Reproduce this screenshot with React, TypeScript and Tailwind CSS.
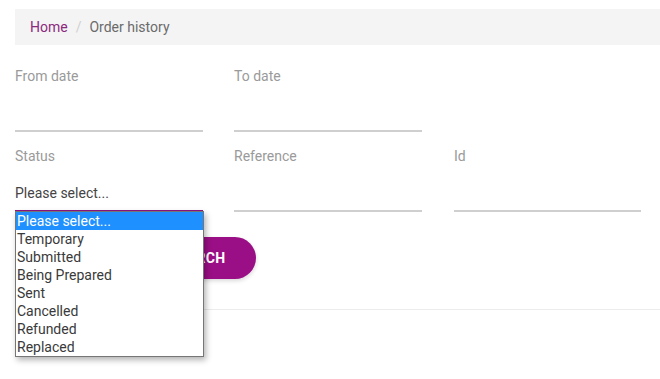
import React from 'react';

const statuses = ['Please select...', 'Temporary', 'Submitted', 'Being Prepared', 'Sent', 'Cancelled', 'Refunded', 'Replaced'];

const Field = ({ label }: { label: string }) => (
  <div className="flex flex-col">
    <div className="h-[20px] text-[14px] leading-[20px] text-[#9a9a9a]">{label}</div>
    <div className="h-[46px] border-b-2 border-[#cfcfcf]" />
  </div>
);

export default function App() {
  return (
    <div
      className="relative w-[660px] h-[379px] overflow-hidden bg-white"
      style={{ fontFamily: 'Roboto, "Liberation Sans", sans-serif' }}
    >
      <div className="ml-[15px] mt-[9px] h-[36px] bg-[#f4f4f4] pl-[15px] flex items-center text-[14px]">
        <span className="text-[#8b2a7c]">Home</span>
        <span className="px-[8px] text-[#d0d0d0]">/</span>
        <span className="text-[#6b6b6b]">Order history</span>
      </div>

      <div className="ml-[15px] mt-[21px] grid grid-cols-[188px_188px_188px] gap-x-[31px] gap-y-[14px]">
        <Field label="From date" />
        <Field label="To date" />
        <div />
        <div className="flex flex-col">
          <div className="h-[20px] text-[14px] leading-[20px] text-[#9a9a9a]">Status</div>
          <div className="h-[46px] border-b-2 border-[#8e1480] pt-[17px] text-[14px] leading-[20px] text-[#444]">
            Please select...
          </div>
        </div>
        <Field label="Reference" />
        <div className="ml-[1px]">
          <Field label="Id" />
        </div>
      </div>

      <div className="ml-[139px] mt-[25px] h-[42px] w-[117px] rounded-full bg-[#9b0f86] text-white text-[14px] font-bold flex items-center justify-center tracking-[0.3px] shadow-[0_2px_4px_rgba(0,0,0,0.15)]">
        SEARCH
      </div>

      <div className="ml-[15px] mt-[30px] border-t border-[#ececec]" />

      <div className="absolute left-[15px] top-[211px] w-[189px] border border-[#767676] bg-white shadow-[2px_3px_6px_rgba(0,0,0,0.3)]">
        {statuses.map((s, i) => (
          <div
            key={s}
            className={
              i === 0
                ? 'h-[18px] leading-[18px] pl-[1px] text-[14px] bg-[#1e90ff] text-white'
                : 'h-[18px] leading-[18px] pl-[1px] text-[14px] text-[#3a3a3a]'
            }
          >
            {s}
          </div>
        ))}
      </div>
    </div>
  );
}
